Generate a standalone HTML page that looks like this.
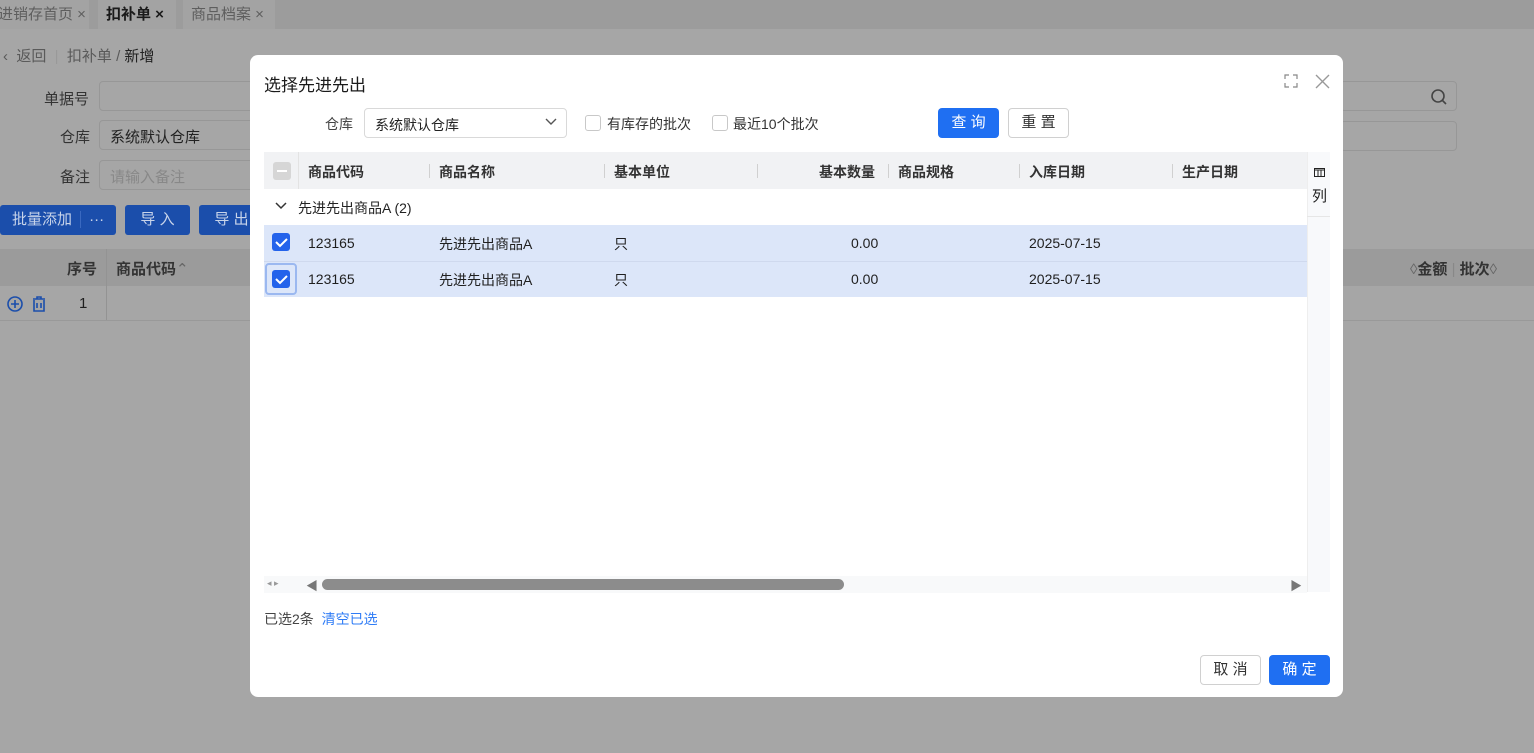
<!DOCTYPE html>
<html><head><meta charset="utf-8"><style>
*{box-sizing:border-box;margin:0;padding:0}
body{width:1534px;height:753px;overflow:hidden;background:#a6a6a6;font-family:"Liberation Sans","Noto Sans CJK SC",sans-serif;font-size:14px;color:#1f1f1f;position:relative}
.a{position:absolute;white-space:nowrap}
.tabbar{left:0;top:0;width:1534px;height:29px;background:#9c9c9c}
.tab{top:0;height:29px;background:#a3a3a3;line-height:29px;color:#5e5e5e;font-size:15px;padding:0 8px}
.inp{background:#a6a6a6;border:1px solid #979797;border-radius:4px;height:30px}
.bbtn{background:#1b4eab;color:#c8d4ea;border-radius:3px;height:30px;line-height:30px;text-align:center;font-size:15px}
.dlg{left:250px;top:55px;width:1093px;height:642px;background:#fff;border-radius:8px}
.cb{width:16px;height:16px;border:1px solid #c8c8c8;border-radius:3px;background:#fff}
.chk{width:18px;height:18px;background:#2463eb;border-radius:3px}
.th{font-weight:bold;color:#333;font-size:14px}
.sep{width:1px;height:14px;background:#d0d0d0}
</style></head><body>
<div class="a tabbar"></div>
<div class="a tab" style="left:-10px;width:99px">进销存首页 ×</div>
<div class="a tab" style="left:98px;width:78px;color:#1a1a1a;font-weight:bold">扣补单 ×</div>
<div class="a tab" style="left:183px;width:92px">商品档案 ×</div>
<div class="a" style="left:3px;top:45px;color:#5a5a5a;font-size:15px">‹ &nbsp;返回 &nbsp;<span style="color:#999">|</span>&nbsp; 扣补单 / <b style="color:#222;font-weight:normal">新增</b></div>
<div class="a" style="left:44px;top:88px;color:#333;font-size:15px">单据号</div>
<div class="a" style="left:60px;top:126px;color:#333;font-size:15px">仓库</div>
<div class="a" style="left:60px;top:166px;color:#333;font-size:15px">备注</div>
<div class="a inp" style="left:99px;top:81px;width:160px"></div>
<div class="a inp" style="left:99px;top:120px;width:160px;padding:5px 10px;font-size:15px;color:#222">系统默认仓库</div>
<div class="a inp" style="left:99px;top:160px;width:160px;padding:5px 10px;font-size:15px;color:#888">请输入备注</div>
<div class="a inp" style="left:1340px;top:81px;width:117px"></div>
<svg class="a" style="left:1430px;top:88px" width="18" height="18"><circle cx="8" cy="8" r="6" fill="none" stroke="#444" stroke-width="1.6"/><line x1="12.5" y1="12.5" x2="16" y2="16" stroke="#444" stroke-width="1.6"/></svg>
<div class="a inp" style="left:1340px;top:121px;width:117px"></div>
<div class="a bbtn" style="left:0;top:205px;width:116px;text-align:left;padding-left:12px">批量添加 <span style="border-left:1px solid #3a69c0;padding-left:8px;margin-left:4px">···</span></div>
<div class="a bbtn" style="left:125px;top:205px;width:65px">导 入</div>
<div class="a bbtn" style="left:199px;top:205px;width:65px">导 出</div>
<div class="a" style="left:0;top:249px;width:1534px;height:37px;background:#9b9b9b"></div>
<div class="a" style="left:106px;top:249px;width:1px;height:72px;background:#939393"></div>
<div class="a th" style="left:67px;top:258px;font-size:15px">序号</div>
<div class="a th" style="left:116px;top:258px;font-size:15px">商品代码<span style="color:#666;font-weight:normal">⌃</span></div>
<div class="a th" style="left:1410px;top:258px;font-size:15px"><span style="color:#666;font-weight:normal">◊</span>金额 <span style="color:#888;font-weight:normal">|</span> 批次<span style="color:#666;font-weight:normal">◊</span></div>
<div class="a" style="left:0;top:320px;width:1534px;height:1px;background:#999"></div>
<svg class="a" style="left:6px;top:295px" width="44" height="18"><circle cx="9" cy="9" r="7" fill="none" stroke="#1b4eab" stroke-width="1.6"/><path d="M9 5v8M5 9h8" stroke="#1b4eab" stroke-width="1.6"/><path d="M27 4h12M31 4V2h4v2M28 5v11h10V5M31 8v5M35 8v5" fill="none" stroke="#1b4eab" stroke-width="1.6"/></svg>
<div class="a" style="left:79px;top:295px;font-size:15px">1</div>

<div class="a dlg"></div>
<div class="a" style="left:264px;top:71px;font-size:17px;color:#1a1a1a">选择先进先出</div>
<svg class="a" style="left:1284px;top:74px" width="14" height="14"><path d="M1 5V1h4M9 1h4v4M13 9v4H9M5 13H1V9" fill="none" stroke="#888" stroke-width="1.2"/></svg>
<svg class="a" style="left:1315px;top:74px" width="15" height="15"><path d="M1 1l13 13M14 1L1 14" stroke="#999" stroke-width="1.4"/></svg>
<div class="a" style="left:325px;top:114px;color:#444">仓库</div>
<div class="a" style="left:364px;top:108px;width:203px;height:30px;border:1px solid #d9d9d9;border-radius:4px;padding:6px 10px;color:#222">系统默认仓库</div>
<svg class="a" style="left:545px;top:118px" width="12" height="8"><path d="M1 1l5 5 5-5" fill="none" stroke="#555" stroke-width="1.4"/></svg>
<div class="a cb" style="left:585px;top:115px"></div><div class="a" style="left:607px;top:114px;color:#333">有库存的批次</div>
<div class="a cb" style="left:712px;top:115px"></div><div class="a" style="left:733px;top:114px;color:#333">最近10个批次</div>
<div class="a" style="left:938px;top:108px;width:61px;height:30px;background:#1f6ff2;border-radius:4px;color:#fff;text-align:center;line-height:30px;font-size:15px">查 询</div>
<div class="a" style="left:1008px;top:108px;width:61px;height:30px;border:1px solid #d0d0d0;border-radius:4px;color:#333;text-align:center;line-height:28px;font-size:15px">重 置</div>

<div class="a" style="left:264px;top:152px;width:1043px;height:37px;background:#f1f2f4"></div>
<div class="a" style="left:298px;top:152px;width:1px;height:37px;background:#e3e3e3"></div>
<div class="a" style="left:298px;top:225px;width:1px;height:72px;background:#e3e3e3"></div>
<div class="a" style="left:273px;top:162px;width:18px;height:18px;background:#d6d6d6;border-radius:3px"><div style="margin:8px 4px;height:2px;background:#fff"></div></div>
<div class="a th" style="left:308px;top:162px">商品代码</div>
<div class="a sep" style="left:429px;top:164px"></div><div class="a th" style="left:439px;top:162px">商品名称</div>
<div class="a sep" style="left:604px;top:164px"></div><div class="a th" style="left:614px;top:162px">基本单位</div>
<div class="a sep" style="left:757px;top:164px"></div><div class="a th" style="left:819px;top:162px">基本数量</div>
<div class="a sep" style="left:888px;top:164px"></div><div class="a th" style="left:898px;top:162px">商品规格</div>
<div class="a sep" style="left:1019px;top:164px"></div><div class="a th" style="left:1029px;top:162px">入库日期</div>
<div class="a sep" style="left:1172px;top:164px"></div><div class="a th" style="left:1182px;top:162px">生产日期</div>
<div class="a" style="left:1307px;top:152px;width:23px;height:440px;background:#f8f9fb;border-left:1px solid #eee"></div>
<div class="a" style="left:1307px;top:216px;width:23px;height:1px;background:#e6e6e6"></div>
<svg class="a" style="left:1314px;top:168px" width="11" height="9"><rect x="0.5" y="0.5" width="10" height="8" fill="none" stroke="#222"/><path d="M0 2h11M4 2v7M7 2v7" stroke="#222"/></svg>
<div class="a" style="left:1312px;top:185px;font-size:15px">列</div>

<svg class="a" style="left:275px;top:202px" width="12" height="8"><path d="M1 1l5 5 5-5" fill="none" stroke="#333" stroke-width="1.5"/></svg>
<div class="a" style="left:298px;top:198px;color:#222">先进先出商品A (2)</div>
<div class="a" style="left:264px;top:225px;width:1043px;height:72px;background:#dce6f9"></div>
<div class="a" style="left:264px;top:261px;width:1043px;height:1px;background:#cfd9ee"></div>
<div class="a chk" style="left:272px;top:233px"></div>
<div class="a" style="left:265px;top:263px;width:32px;height:32px;border:2px solid #9bb8f0;border-radius:4px"></div>
<div class="a chk" style="left:272px;top:270px"></div>
<svg class="a" style="left:272px;top:233px" width="18" height="56"><path d="M4 9l4 4 7-7M4 46l4 4 7-7" fill="none" stroke="#fff" stroke-width="2"/></svg>
<div class="a" style="left:308px;top:235px">123165</div><div class="a" style="left:439px;top:234px">先进先出商品A</div><div class="a" style="left:614px;top:234px">只</div><div class="a" style="left:851px;top:235px">0.00</div><div class="a" style="left:1029px;top:235px">2025-07-15</div>
<div class="a" style="left:308px;top:271px">123165</div><div class="a" style="left:439px;top:270px">先进先出商品A</div><div class="a" style="left:614px;top:270px">只</div><div class="a" style="left:851px;top:271px">0.00</div><div class="a" style="left:1029px;top:271px">2025-07-15</div>

<div class="a" style="left:264px;top:576px;width:1043px;height:17px;background:#f8f9fa"></div>
<div class="a" style="left:267px;top:578px;font-size:9px;color:#999">◂ ▸</div>
<div class="a" style="left:306px;top:577px;font-size:12px;color:#777">◀</div>
<div class="a" style="left:1290px;top:577px;font-size:12px;color:#777">▶</div>
<div class="a" style="left:322px;top:579px;width:522px;height:11px;background:#8c8c8c;border-radius:6px"></div>
<div class="a" style="left:264px;top:609px;color:#444">已选2条 &nbsp;<span style="color:#2f7cf6">清空已选</span></div>
<div class="a" style="left:1200px;top:655px;width:61px;height:30px;border:1px solid #d0d0d0;border-radius:4px;text-align:center;line-height:28px;font-size:15px;color:#333">取 消</div>
<div class="a" style="left:1269px;top:655px;width:61px;height:30px;background:#1f6ff2;border-radius:4px;text-align:center;line-height:30px;font-size:15px;color:#fff">确 定</div>
</body></html>
